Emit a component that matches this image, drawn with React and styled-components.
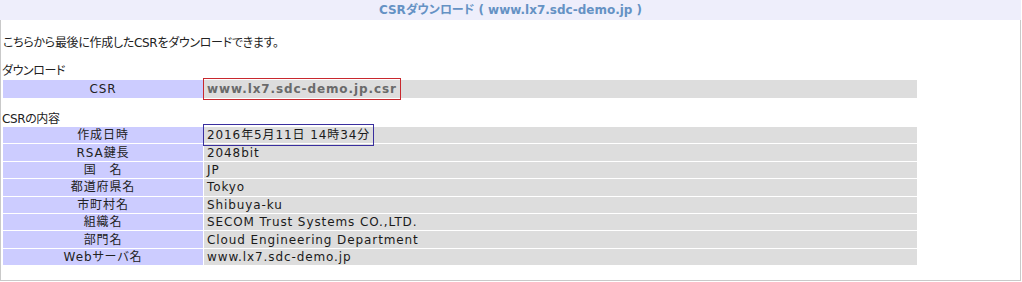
import React from "react";
import styled, { createGlobalStyle } from "styled-components";

const GlobalStyle = createGlobalStyle`
  body {
    margin: 0;
    background: #ffffff;
    font-family: "DejaVu Sans", "Noto Sans CJK JP", sans-serif;
    font-size: 12px;
    color: #222222;
    font-feature-settings: "palt";
  }
`;

const csrInfo = [
  { label: "作成日時", value: "2016年5月11日 14時34分", mark: "#3a2f9e" },
  { label: "RSA鍵長", value: "2048bit" },
  { label: "国　名", value: "JP" },
  { label: "都道府県名", value: "Tokyo" },
  { label: "市町村名", value: "Shibuya-ku" },
  { label: "組織名", value: "SECOM Trust Systems CO.,LTD." },
  { label: "部門名", value: "Cloud Engineering Department" },
  { label: "Webサーバ名", value: "www.lx7.sdc-demo.jp" },
];

const App = () => {
  return (
    <>
      <GlobalStyle />
      <PageStyle>
        <div className="header">CSRダウンロード ( www.lx7.sdc-demo.jp )</div>
        <div className="body">
          <p className="intro">こちらから最後に作成したCSRをダウンロードできます。</p>

          <p className="caption">ダウンロード</p>
          <InfoTable $rowHeight={18}>
            <tbody>
              <tr>
                <th>CSR</th>
                <td>
                  <Mark $color="#c8282e" className="file">
                    www.lx7.sdc-demo.jp.csr
                  </Mark>
                </td>
              </tr>
            </tbody>
          </InfoTable>

          <p className="caption second">CSRの内容</p>
          <InfoTable $rowHeight={16.4}>
            <tbody>
              {csrInfo.map((row) => (
                <tr key={row.label}>
                  <th>{row.label}</th>
                  <td>
                    {row.mark ? <Mark $color={row.mark}>{row.value}</Mark> : row.value}
                  </td>
                </tr>
              ))}
            </tbody>
          </InfoTable>
        </div>
      </PageStyle>
    </>
  );
};

const PageStyle = styled.div`
  width: 1021px;
  height: 281px;
  display: flex;
  flex-direction: column;

  .header {
    height: 20px;
    line-height: 20px;
    background: #eeeefb;
    text-align: center;
    font-weight: bold;
    color: #6592c4;
  }
  .body {
    flex: 1;
    border: 1px solid #c9c9c9;
    border-top: none;
    padding: 0 0 0 1px;
  }
  .intro {
    margin: 16px 0 0 1px;
    line-height: 14px;
    letter-spacing: -0.3px;
  }
  .caption {
    margin: 14px 0 1px 0;
    line-height: 14px;
    letter-spacing: -0.4px;
  }
  .caption.second {
    margin-top: 13px;
    margin-bottom: 0;
  }
`;

const InfoTable = styled.table`
  width: 916px;
  border-collapse: separate;
  border-spacing: 1px;
  th,
  td {
    height: ${(p) => p.$rowHeight}px;
    padding: 0;
    line-height: 14px;
    white-space: nowrap;
    letter-spacing: 0.9px;
  }
  th {
    width: 200px;
    background: #ccccff;
    font-weight: normal;
    text-align: center;
  }
  td {
    background: #dddddd;
    padding-left: 3px;
    color: #1a1a1a;
  }
  .file {
    font-weight: bold;
    color: #6a6a6a;
  }
`;

const Mark = styled.span`
  border: 1px solid ${(p) => p.$color};
  padding: 3px 3px;
  margin-left: -4px;
`;

export default App;
